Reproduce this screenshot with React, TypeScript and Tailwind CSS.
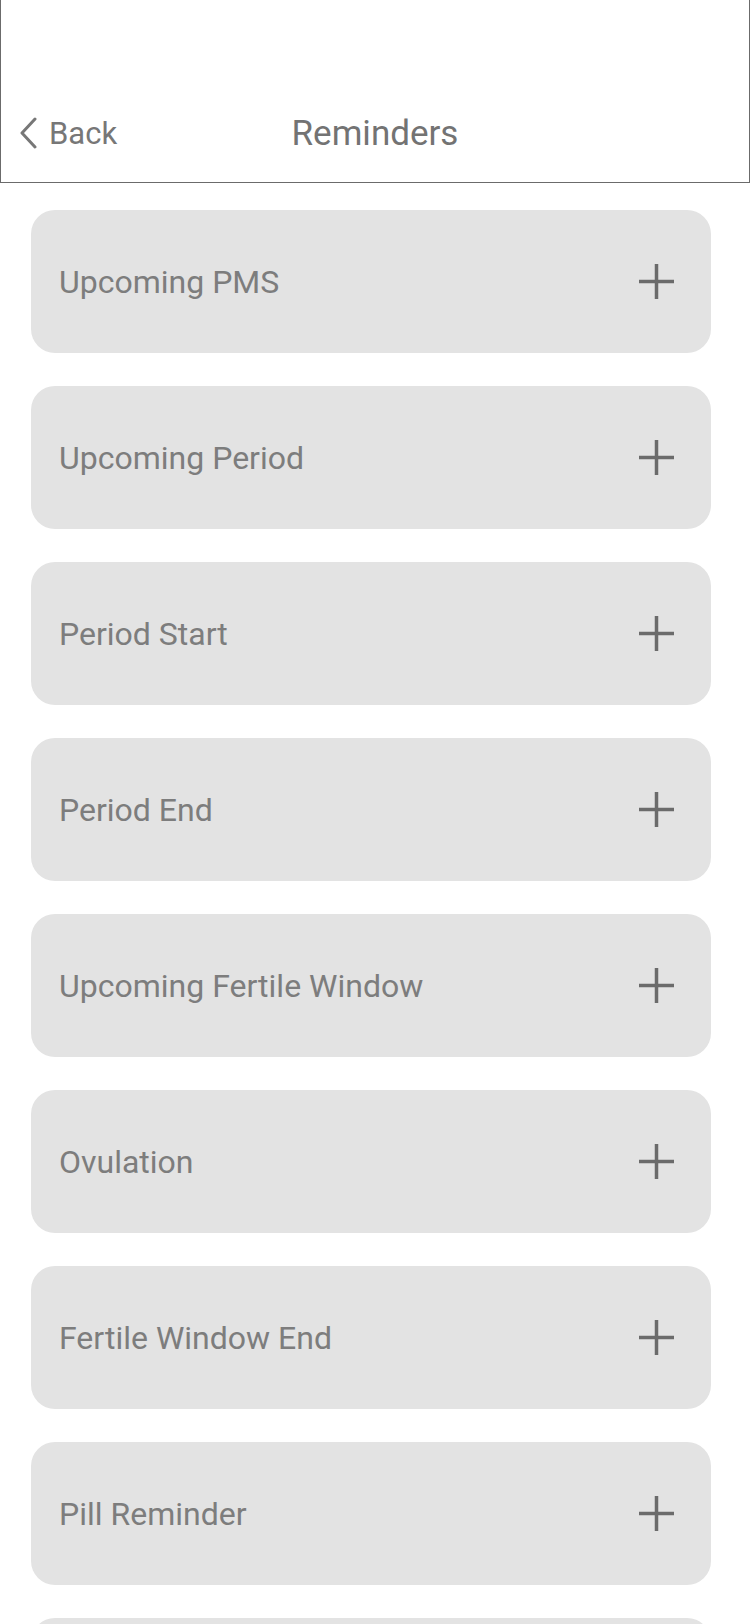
import React from 'react'

const reminders = [
  'Upcoming PMS',
  'Upcoming Period',
  'Period Start',
  'Period End',
  'Upcoming Fertile Window',
  'Ovulation',
  'Fertile Window End',
  'Pill Reminder',
]

function BackChevron() {
  return (
    <svg width="18" height="32" viewBox="0 0 18 32" fill="none">
      <polyline points="16,2 3,16 16,30" stroke="#777777" strokeWidth="3" strokeLinecap="round" strokeLinejoin="round" />
    </svg>
  )
}

function PlusIcon() {
  return (
    <svg width="35" height="35" viewBox="0 0 35 35" fill="none">
      <line x1="0" y1="17.5" x2="35" y2="17.5" stroke="#6b6b6b" strokeWidth="3.5" />
      <line x1="17.5" y1="0" x2="17.5" y2="35" stroke="#6b6b6b" strokeWidth="3.5" />
    </svg>
  )
}

export default function App() {
  return (
    <div className="h-[1624px] w-[750px] bg-white overflow-hidden" style={{ fontFamily: 'Roboto, "Noto Sans", sans-serif' }}>
      {/* Top bar */}
      <header className="h-[183px] border-x border-b border-[#6b6b6b] flex items-end pb-[27px]">
        <div className="grid grid-cols-[1fr_auto_1fr] items-center w-full h-[44px]">
          <button className="flex items-center gap-[12px] pl-[18px] text-[31px] text-[#777777] leading-none">
            <BackChevron />
            <span>Back</span>
          </button>
          <h1 className="text-[35px] text-[#737373] leading-none font-normal">Reminders</h1>
          <div />
        </div>
      </header>

      {/* Reminder list */}
      <div className="flex flex-col gap-[33px] pl-[31px] pr-[39px] pt-[27px]">
        {reminders.map((item) => (
          <div
            key={item}
            className="h-[143px] shrink-0 rounded-[24px] bg-[#e3e3e3] flex items-center justify-between pl-[28px] pr-[37px]"
          >
            <span className="text-[32px] text-[#7d7d7d] leading-none">{item}</span>
            <PlusIcon />
          </div>
        ))}
        {/* next card, only its top edge is in view */}
        <div className="h-[143px] shrink-0 rounded-[24px] bg-[#e3e3e3]" />
      </div>
    </div>
  )
}
